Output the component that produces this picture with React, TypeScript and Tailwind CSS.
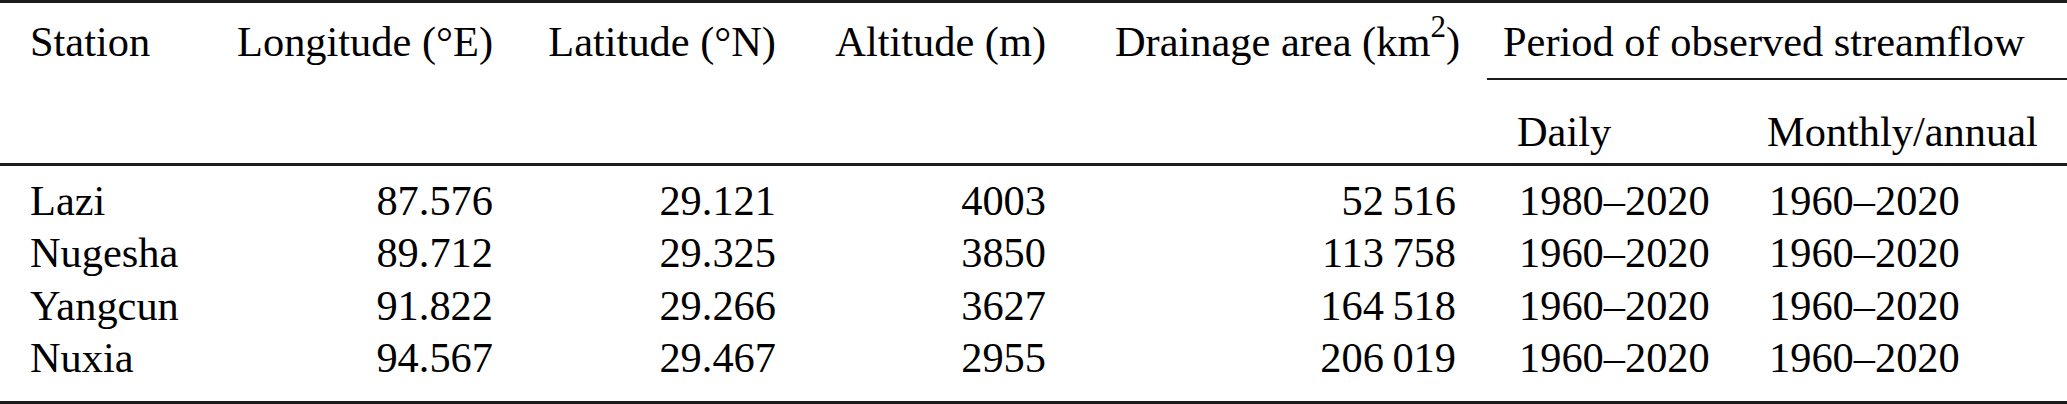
import React from "react"

type Station = {
  name: string
  lon: string
  lat: string
  alt: string
  area: string
  daily: string
  monthly: string
}

// thin space used as the thousands separator
const ts = "\u2009"

const stations: Station[] = [
  { name: "Lazi", lon: "87.576", lat: "29.121", alt: "4003", area: "52" + ts + "516", daily: "1980–2020", monthly: "1960–2020" },
  { name: "Nugesha", lon: "89.712", lat: "29.325", alt: "3850", area: "113" + ts + "758", daily: "1960–2020", monthly: "1960–2020" },
  { name: "Yangcun", lon: "91.822", lat: "29.266", alt: "3627", area: "164" + ts + "518", daily: "1960–2020", monthly: "1960–2020" },
  { name: "Nuxia", lon: "94.567", lat: "29.467", alt: "2955", area: "206" + ts + "019", daily: "1960–2020", monthly: "1960–2020" },
]

export default function App() {
  return (
    <div className="w-[2067px] h-[404px] bg-white text-black text-[42.4px] leading-[52.5px] overflow-hidden">
      <div className="font-['Liberation_Serif']">
        <div className="border-t-[3px] border-b-[3px] border-[#1c1c1c]">
          {/* header */}
          <div className="grid grid-cols-[200px_293px_283px_270px_414px_280px_1fr] border-b-[3px] border-[#1c1c1c]">
            <div className="row-span-2 pt-[13.4px] pl-[30px] whitespace-nowrap">Station</div>
            <div className="row-span-2 pt-[13.4px] text-right whitespace-nowrap">Longitude (°E)</div>
            <div className="row-span-2 pt-[13.4px] text-right whitespace-nowrap">Latitude (°N)</div>
            <div className="row-span-2 pt-[13.4px] text-right whitespace-nowrap">Altitude (m)</div>
            <div className="row-span-2 pt-[13.4px] text-right whitespace-nowrap">
              Drainage area (km<sup className="text-[31px] -top-[19px]">2</sup>)
            </div>
            <div className="col-span-2 pt-[13.4px]">
              <div className="ml-[27px] pl-[16px] pb-[9px] border-b-2 border-[#1c1c1c] whitespace-nowrap">
                Period of observed streamflow
              </div>
            </div>
            <div className="pt-[26.4px] pb-[4.1px] pl-[57px] whitespace-nowrap">Daily</div>
            <div className="pt-[26.4px] pb-[4.1px] pl-[27px] whitespace-nowrap">Monthly/annual</div>
          </div>

          {/* body */}
          <div className="grid grid-cols-[200px_293px_283px_270px_414px_280px_1fr] pt-[9px] pb-[16px]">
            {stations.map((s) => (
              <React.Fragment key={s.name}>
                <div className="pl-[30px]">{s.name}</div>
                <div className="text-right">{s.lon}</div>
                <div className="text-right">{s.lat}</div>
                <div className="text-right">{s.alt}</div>
                <div className="text-right pr-[4px] whitespace-nowrap">{s.area}</div>
                <div className="pl-[59px]">{s.daily}</div>
                <div className="pl-[29px]">{s.monthly}</div>
              </React.Fragment>
            ))}
          </div>
        </div>
      </div>
    </div>
  )
}
